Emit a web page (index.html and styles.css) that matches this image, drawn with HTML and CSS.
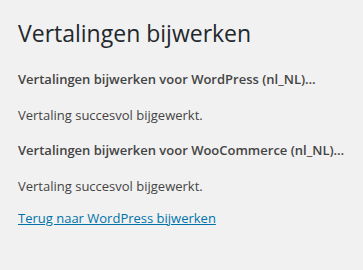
FILE: index.html
```html
<!DOCTYPE html>
<html lang="nl">
<head>
    <meta charset="UTF-8">
    <title>Vertalingen bijwerken</title>
    <link rel="stylesheet" href="styles.css">
</head>
<body>
<div class="wrap">
    <h1>Vertalingen bijwerken</h1>
    <p class="step">Vertalingen bijwerken voor WordPress (nl_NL)&hellip;</p>
    <p>Vertaling succesvol bijgewerkt.</p>
    <p class="step">Vertalingen bijwerken voor WooCommerce (nl_NL)&hellip;</p>
    <p>Vertaling succesvol bijgewerkt.</p>
    <p class="back"><a href="#">Terug naar WordPress bijwerken</a></p>
</div>
</body>
</html>
```

FILE: styles.css
```css
body {
    margin: 0;
    background-color: #f1f1f1;
    color: #444;
    font-family: "Open Sans", sans-serif;
    font-size: 13px;
    line-height: 1.4em;
}
.wrap {
    padding: 19px 18px 0 18px;
}
h1 {
    font-size: 23px;
    font-weight: 400;
    line-height: 29px;
    color: #23282d;
    margin: 0 0 22px 0;
}
p {
    margin: 0 0 17.5px 0;
}
.step {
    font-weight: 600;
}
.back {
    margin-top: -4px;
}
a {
    color: #0073aa;
}
```
